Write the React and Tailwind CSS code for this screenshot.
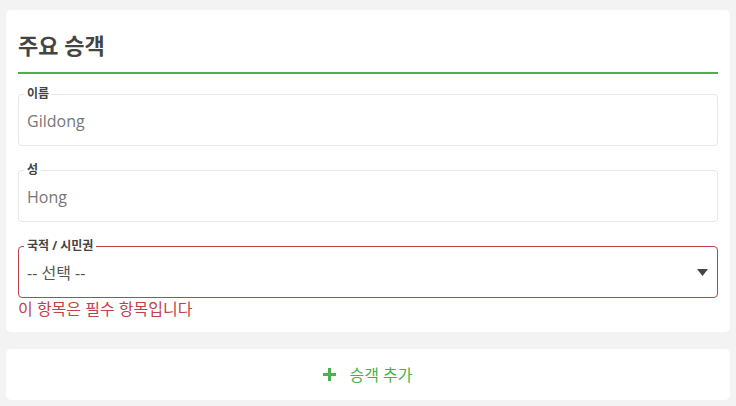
import React from 'react';

const font = { fontFamily: '"Open Sans", "Noto Sans CJK KR", sans-serif' };

function Field({ label, value }) {
  return (
    <fieldset className="rounded-[4px] border border-[#e6e6e6] px-[8px] pb-[6px]">
      <legend className="-ml-[3px] px-[3px] text-[12px] leading-[16px] font-bold text-[#444]">{label}</legend>
      <div className="flex h-[37px] items-center text-[16px] text-[#777]">{value}</div>
    </fieldset>
  );
}

export default function App() {
  return (
    <div className="min-h-[406px] w-[736px] bg-[#f3f3f3] px-[6px] pt-[10px]" style={font}>
      <div className="rounded-[5px] bg-white px-[12px] pb-[13px] pt-[20px]">
        <div className="border-b-2 border-[#4caf50] pb-[12px]">
          <h2 className="text-[22px] leading-[30px] font-bold text-[#444]">주요 승객</h2>
        </div>
        <div className="mt-[12px] flex flex-col gap-[16px]">
          <Field label="이름" value="Gildong" />
          <Field label="성" value="Hong" />
          <fieldset className="rounded-[4px] border border-[#c2404a] px-[8px] pb-[6px]">
            <legend className="-ml-[3px] px-[3px] text-[12px] leading-[16px] font-bold text-[#444]">국적 / 시민권</legend>
            <div className="flex h-[37px] items-center justify-between text-[16px] text-[#555]">
              <span>-- 선택 --</span>
              <svg width="11" height="7" viewBox="0 0 11 7" className="mr-[1px]">
                <path d="M0 0h11L5.5 7z" fill="#444" />
              </svg>
            </div>
          </fieldset>
        </div>
        <p className="mt-[1px] text-[16px] leading-[20px] text-[#c2404a]">이 항목은 필수 항목입니다</p>
      </div>
      <div className="mt-[17px] flex h-[51px] items-center justify-center gap-[13px] rounded-[5px] bg-white text-[16px] text-[#4caf50]">
        <svg width="13" height="13" viewBox="0 0 13 13">
          <path d="M6.5 0v13M0 6.5h13" stroke="#4caf50" strokeWidth="3" />
        </svg>
        <span>승객 추가</span>
      </div>
    </div>
  );
}
